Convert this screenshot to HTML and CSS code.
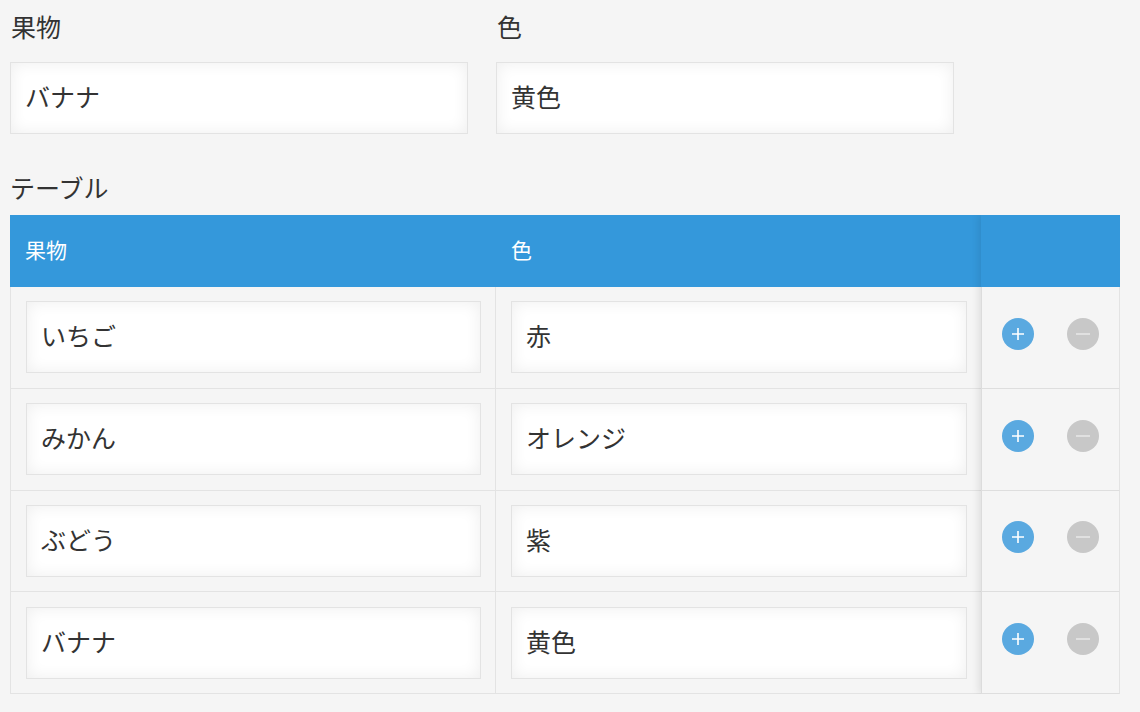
FILE: index.html
```html
<!DOCTYPE html>
<html lang="ja">
<head>
  <meta charset="UTF-8" />
  <title>テーブル</title>
  <link rel="stylesheet" href="styles.css">
</head>
<body>
  <div class="form-row">
    <div class="form-group">
      <div class="form-label">果物</div>
      <div class="text-field">バナナ</div>
    </div>
    <div class="form-group">
      <div class="form-label">色</div>
      <div class="text-field">黄色</div>
    </div>
  </div>
  <div class="table-label">テーブル</div>
  <div class="sub-table">
    <div class="table-row table-head">
      <div class="head-cell">果物</div>
      <div class="head-cell">色</div>
      <div class="head-cell"></div>
    </div>
    <div class="table-row">
      <div class="cell"><div class="text-field">いちご</div></div>
      <div class="cell"><div class="text-field">赤</div></div>
      <div class="cell-action">
        <button class="round-btn add"><svg viewBox="0 0 16 16"><path d="M8 2v12M2 8h12"/></svg></button>
        <button class="round-btn remove"><svg viewBox="0 0 16 16"><path d="M1 8h14"/></svg></button>
      </div>
    </div>
    <div class="table-row">
      <div class="cell"><div class="text-field">みかん</div></div>
      <div class="cell"><div class="text-field">オレンジ</div></div>
      <div class="cell-action">
        <button class="round-btn add"><svg viewBox="0 0 16 16"><path d="M8 2v12M2 8h12"/></svg></button>
        <button class="round-btn remove"><svg viewBox="0 0 16 16"><path d="M1 8h14"/></svg></button>
      </div>
    </div>
    <div class="table-row">
      <div class="cell"><div class="text-field">ぶどう</div></div>
      <div class="cell"><div class="text-field">紫</div></div>
      <div class="cell-action">
        <button class="round-btn add"><svg viewBox="0 0 16 16"><path d="M8 2v12M2 8h12"/></svg></button>
        <button class="round-btn remove"><svg viewBox="0 0 16 16"><path d="M1 8h14"/></svg></button>
      </div>
    </div>
    <div class="table-row">
      <div class="cell"><div class="text-field">バナナ</div></div>
      <div class="cell"><div class="text-field">黄色</div></div>
      <div class="cell-action">
        <button class="round-btn add"><svg viewBox="0 0 16 16"><path d="M8 2v12M2 8h12"/></svg></button>
        <button class="round-btn remove"><svg viewBox="0 0 16 16"><path d="M1 8h14"/></svg></button>
      </div>
    </div>
    <div class="action-shade"></div>
  </div>
</body>
</html>
```

FILE: styles.css
```css
:root {
  --bg: #f5f5f5;
  --line: #e3e3e3;
  --blue: #3498db;
  --text: #333;
}
* { box-sizing: border-box; margin: 0; padding: 0; }
body {
  font-family: "Noto Sans CJK JP", "Noto Sans", sans-serif;
  background: var(--bg);
  color: var(--text);
  padding: 8px 20px 0 10px;
}
.form-row {
  display: flex;
  gap: 28px;
}
.form-group { width: 458px; }
.form-label {
  font-size: 25px;
  line-height: 36px;
  padding-left: 1px;
  margin-bottom: 18px;
}
.text-field {
  height: 72px;
  padding: 0 14px;
  font-size: 25px;
  line-height: 66px;
  background: #fff;
  border: 1px solid var(--line);
  box-shadow: inset 0 0 16px rgba(0, 0, 0, 0.07);
}
.table-label {
  font-size: 25px;
  line-height: 36px;
  margin-top: 35px;
  margin-bottom: 10px;
}
.sub-table {
  position: relative;
  width: 1110px;
}
.table-row {
  display: grid;
  grid-template-columns: 486px 485px 139px;
  height: 101.75px;
}
.table-head {
  height: 72px;
  background: var(--blue);
  color: #fff;
}
.head-cell {
  font-size: 21px;
  line-height: 68px;
  padding-left: 15px;
}
.cell {
  padding: 14.3px 14px 0 15px;
  border-bottom: 1px solid var(--line);
}
.cell:first-child {
  border-left: 1px solid var(--line);
  border-right: 1px solid var(--line);
}
.cell-action {
  display: flex;
  gap: 33px;
  padding: 30.9px 0 0 20px;
  border-left: 1px solid #dcdcdc;
  border-right: 1px solid var(--line);
  border-bottom: 1px solid #dedede;
}
.action-shade {
  position: absolute;
  top: 0;
  right: 0;
  bottom: 0;
  width: 139px;
  box-shadow: -2px 0 8px rgba(0, 0, 0, 0.1);
  clip-path: inset(0 0 0 -12px);
  pointer-events: none;
}
.round-btn {
  width: 32px;
  height: 32px;
  border: none;
  border-radius: 50%;
  display: flex;
  align-items: center;
  justify-content: center;
  filter: blur(0.4px);
}
.round-btn svg {
  width: 16px;
  height: 16px;
  fill: none;
  stroke: #fff;
  stroke-width: 1.6;
}
.round-btn.add { background: #5aa9e0; }
.round-btn.remove { background: #c8c8c8; }
.round-btn.remove svg { stroke: #e6e6e6; }
```
